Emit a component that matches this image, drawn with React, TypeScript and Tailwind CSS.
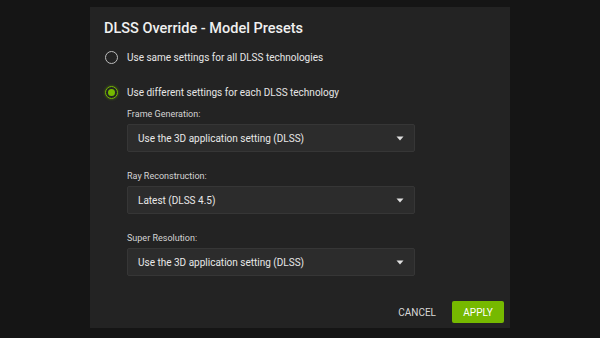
const font = { fontFamily: 'Roboto, "Liberation Sans", sans-serif' };

function Radio({ checked, label }: { checked?: boolean; label: string }) {
  return (
    <div className="flex items-center h-[20px]">
      {checked ? (
        <span className="w-[13px] h-[13px] rounded-full border-[1.5px] border-[#76b900] flex items-center justify-center shadow-[0_0_3px_rgba(118,185,0,0.5)]">
          <span className="w-[7px] h-[7px] rounded-full bg-[#76b900]" />
        </span>
      ) : (
        <span className="w-[13px] h-[13px] rounded-full border-[1.5px] border-[#bdbdbd]" />
      )}
      <span className="ml-[9px] text-[10px] text-[#e6e6e6]">{label}</span>
    </div>
  );
}

function Select({ label, value }: { label: string; value: string }) {
  return (
    <div className="flex flex-col">
      <div className="text-[9px] text-[#d4d4d4] h-[12px] leading-[12px]">{label}</div>
      <div className="mt-[4px] w-[288px] h-[28px] bg-[#2c2c2c] border border-[#363636] rounded-[2px] flex items-center justify-between pl-[10px] pr-[10px]">
        <span className="text-[10px] text-[#e8e8e8]">{value}</span>
        <svg width="8" height="5" viewBox="0 0 8 5">
          <path d="M0.5 0.5 L7.5 0.5 L4 4.5 Z" fill="#e0e0e0" />
        </svg>
      </div>
    </div>
  );
}

export default function App() {
  return (
    <div className="w-[600px] h-[338px] bg-[#151515] flex justify-center pt-[7px]" style={font}>
      <div className="w-[420px] h-[321px] bg-[#232323] flex flex-col pl-[14px] pr-[6px]">
        <div className="mt-[13px] text-[14.5px] font-medium text-[#f0f0f0] leading-[18px]">
          DLSS Override - Model Presets
        </div>
        <div className="mt-[9px] pl-[1px]">
          <Radio label="Use same settings for all DLSS technologies" />
        </div>
        <div className="mt-[15px] pl-[1px]">
          <Radio checked label="Use different settings for each DLSS technology" />
        </div>
        <div className="ml-[23px] mt-[6px] flex flex-col gap-[18px]">
          <Select label="Frame Generation:" value="Use the 3D application setting (DLSS)" />
          <Select label="Ray Reconstruction:" value="Latest (DLSS 4.5)" />
          <Select label="Super Resolution:" value="Use the 3D application setting (DLSS)" />
        </div>
        <div className="mt-auto mb-[5px] flex items-center justify-end">
          <span className="text-[10px] text-[#d8d8d8] mr-[16px]">CANCEL</span>
          <button className="w-[52px] h-[22px] bg-[#76b900] text-[10px] text-white rounded-[2px]">
            APPLY
          </button>
        </div>
      </div>
    </div>
  );
}
